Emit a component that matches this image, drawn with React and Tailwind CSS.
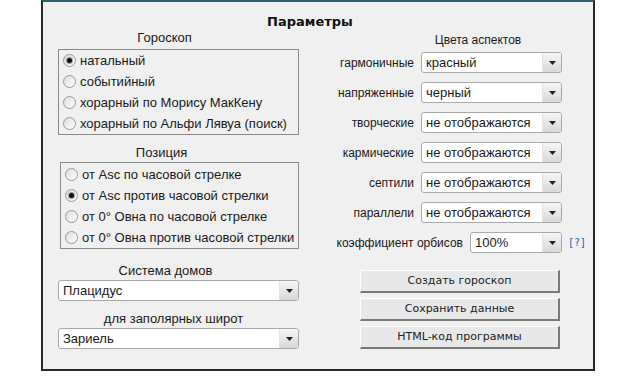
import React from 'react';

const sans = { fontFamily: '"Liberation Sans", Arial, sans-serif' };

function Radio({ checked, label }) {
  return (
    <label className="flex items-center h-[21px] pl-[4px] gap-[4px] text-[13px] text-[#1a1a1a]">
      <span className="w-[13px] h-[13px] rounded-full border border-[#999] bg-gradient-to-br from-[#dcdcdc] to-white flex items-center justify-center shrink-0">
        {checked && <span className="w-[5px] h-[5px] rounded-full bg-[#111] shadow-[0_0_1px_1px_rgba(0,0,0,0.35)]" />}
      </span>
      <span>{label}</span>
    </label>
  );
}

function Select({ value, className = '' }) {
  return (
    <div className={`flex h-[21px] rounded-[3px] border border-[#a9a9a9] bg-white overflow-hidden ${className}`}>
      <span className="flex-1 pl-[4px] text-[13px] leading-[19px] text-[#1a1a1a] truncate">{value}</span>
      <span className="w-[19px] flex items-center justify-center border-l border-[#e4e4e4] bg-gradient-to-b from-[#f6f6f6] to-[#d8d8d8]">
        <svg width="7" height="4" viewBox="0 0 7 4"><path d="M0 0h7L3.5 4z" fill="#222" /></svg>
      </span>
    </div>
  );
}

function AspectRow({ label, value, extra }) {
  return (
    <div className="flex items-center justify-end h-[21px]">
      <span className="text-[12px] text-[#1a1a1a] mr-[7px]">{label}</span>
      <Select value={value} className={extra ? 'w-[92px]' : 'w-[141px]'} />
      <span className="w-[23px] pl-[6px] text-[10px] text-[#2060b0]" style={{ fontFamily: '"DejaVu Sans Mono", monospace' }}>
        {extra ? '[?]' : ''}
      </span>
    </div>
  );
}

function Btn({ children }) {
  return (
    <button className="w-[200px] h-[23px] bg-[#e8e8e8] border-t border-l border-white border-b-2 border-r-2 border-b-[#7a7a7a] border-r-[#7a7a7a] text-[11px] text-[#222]" style={{ fontFamily: '"DejaVu Sans", Verdana, sans-serif' }}>
      {children}
    </button>
  );
}

export default function App() {
  return (
    <div className="w-[622px] h-[386px] bg-white" style={sans}>
      <div className="ml-[41px] w-[554px] h-[371px] bg-[#f0f0f0] border-t-2 border-t-[#2f6262] border-l-2 border-r-2 border-b-2 border-l-[#2a2a2a] border-r-[#2a2a2a] border-b-[#2a2a2a]">
        <div className="pt-[11px] h-[29px] pr-[16px] text-center font-bold text-[13px] leading-[18px] text-[#111]" style={{ fontFamily: '"DejaVu Sans", Verdana, sans-serif' }}>
          Параметры
        </div>
        <div className="flex">
          <div className="ml-[15px] w-[241px]">
            <div className="pr-[28px] text-center text-[13px] leading-[14px] text-[#1a1a1a]">Гороскоп</div>
            <div className="mt-[4px] border border-[#8a8a8a]">
              <Radio checked label="натальный" />
              <Radio label="событийный" />
              <Radio label="хорарный по Морису МакКену" />
              <Radio label="хорарный по Альфи Лявуа (поиск)" />
            </div>
            <div className="mt-[11px] pr-[34px] text-center text-[13px] leading-[14px] text-[#1a1a1a]">Позиция</div>
            <div className="mt-[2px] ml-[2px] border border-[#8a8a8a] pt-[1px]">
              <Radio label="от Asc по часовой стрелке" />
              <Radio checked label="от Asc против часовой стрелки" />
              <Radio label="от 0° Овна по часовой стрелке" />
              <Radio label="от 0° Овна против часовой стрелки" />
            </div>
            <div className="mt-[15px] pr-[26px] text-center text-[13px] leading-[14px] text-[#1a1a1a]">Система домов</div>
            <Select value="Плацидус" className="mt-[2px]" />
            <div className="mt-[11px] pr-[10px] text-center text-[13px] leading-[14px] text-[#1a1a1a]">для заполярных широт</div>
            <Select value="Зариель" className="mt-[2px]" />
          </div>
          <div className="flex-1 pr-[8px]">
            <div className="flex justify-end pr-[27px] mt-[2px]">
              <div className="w-[160px] text-center text-[12px] leading-[14px] text-[#1a1a1a]">Цвета аспектов</div>
            </div>
            <div className="mt-[5px] flex flex-col gap-[9px]">
              <AspectRow label="гармоничные" value="красный" />
              <AspectRow label="напряженные" value="черный" />
              <AspectRow label="творческие" value="не отображаются" />
              <AspectRow label="кармические" value="не отображаются" />
              <AspectRow label="септили" value="не отображаются" />
              <AspectRow label="параллели" value="не отображаются" />
              <AspectRow label="коэффициент орбисов" value="100%" extra />
            </div>
            <div className="mt-[17px] ml-[61px] flex flex-col gap-[5px]">
              <Btn>Создать гороскоп</Btn>
              <Btn>Сохранить данные</Btn>
              <Btn>HTML-код программы</Btn>
            </div>
          </div>
        </div>
      </div>
    </div>
  );
}
